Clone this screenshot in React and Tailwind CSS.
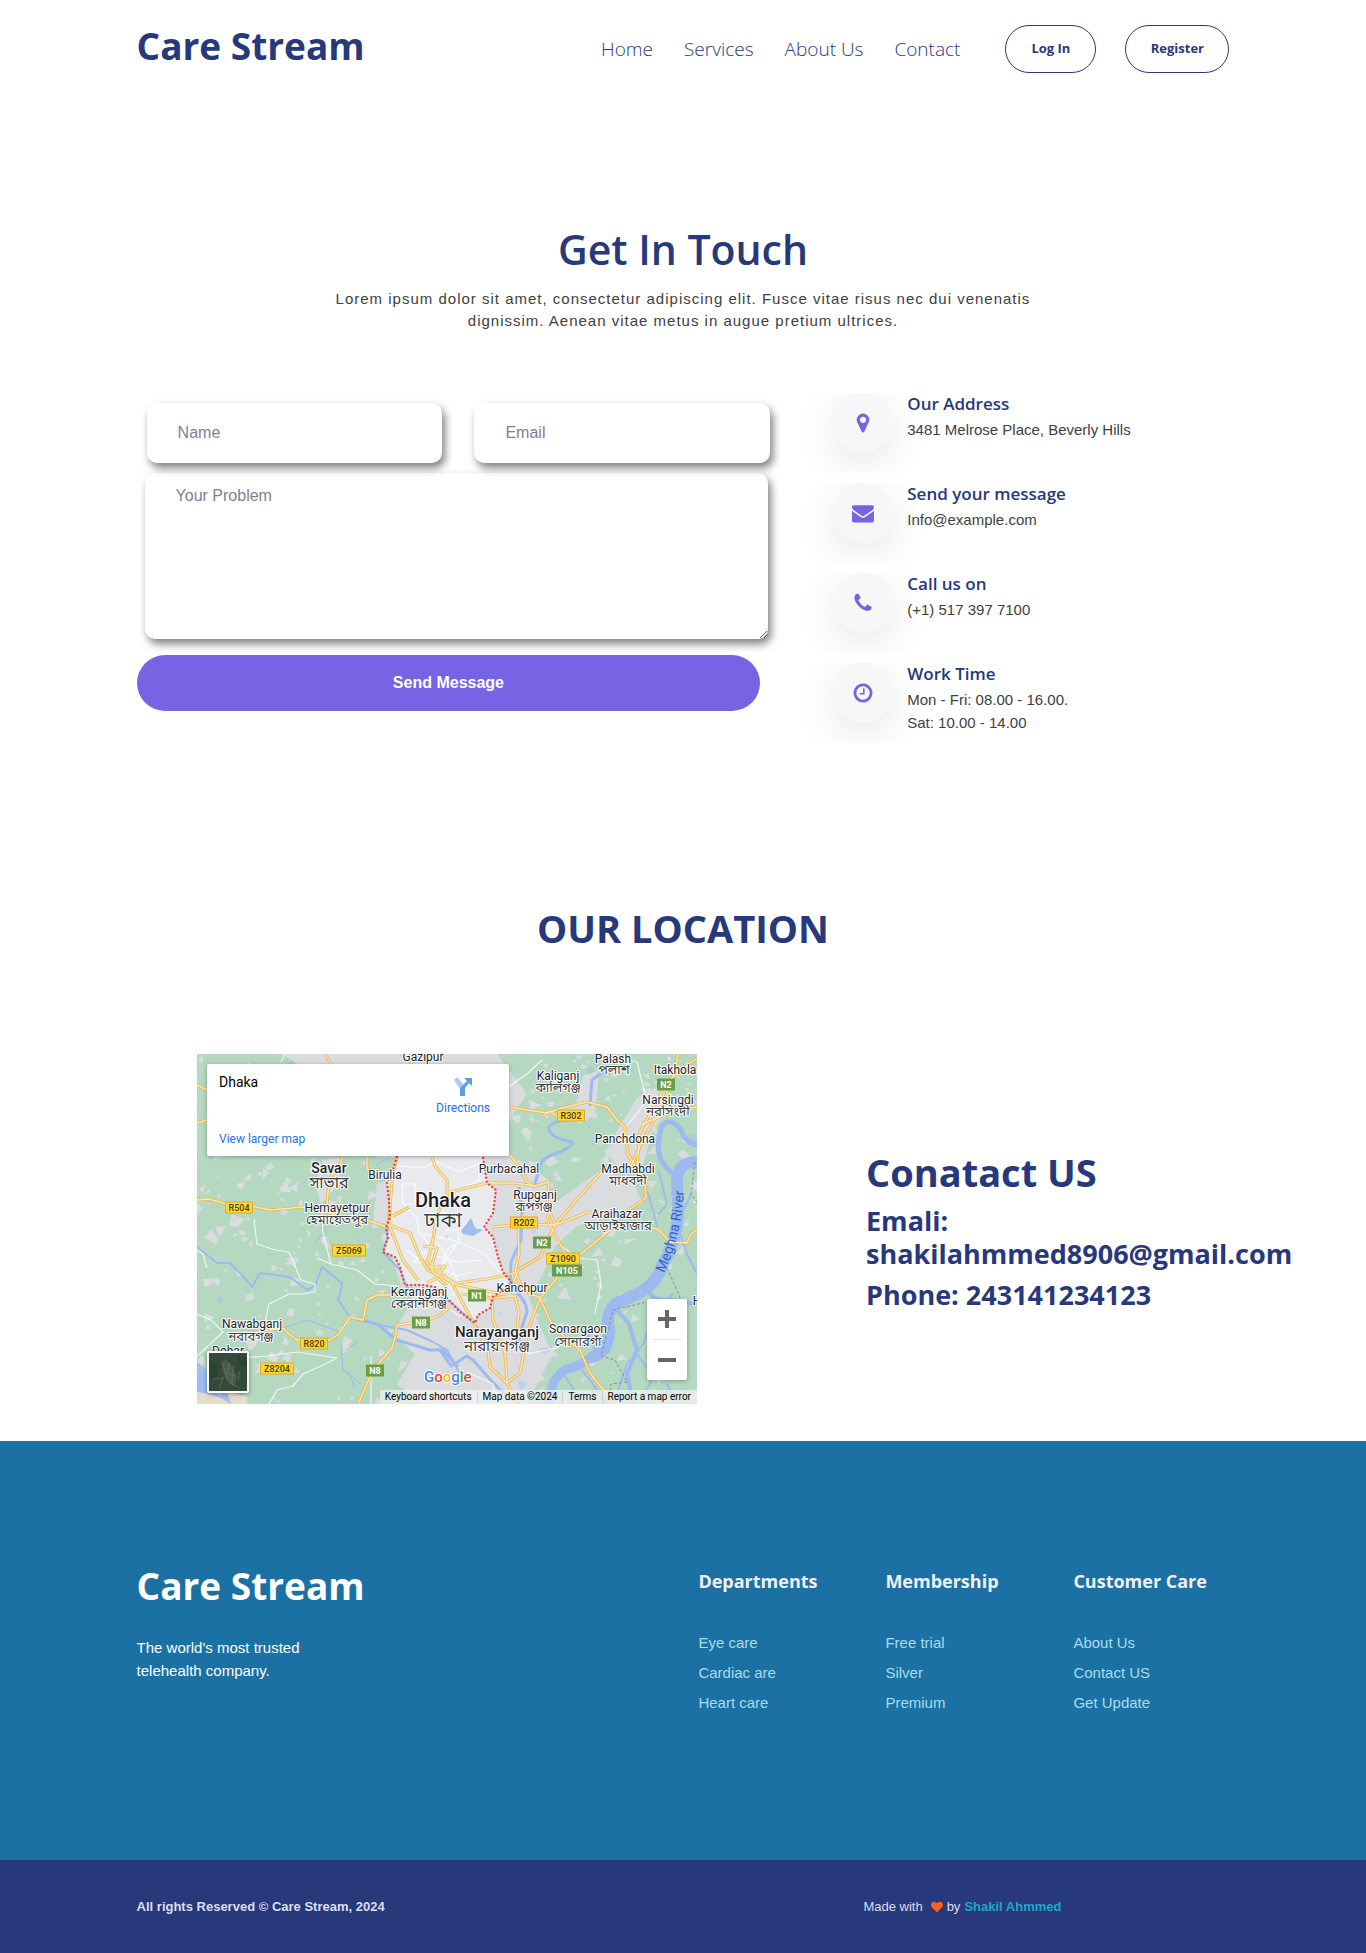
import React from "react";

const NAVY = "text-[#27387b]";
const HEAD = "font-['Segoe_UI','Open_Sans',sans-serif]";
const BODY = "font-['Liberation_Sans',Arial,sans-serif]";

const ICONS = {
  marker:
    "M1152 640q0-106-75-181t-181-75-181 75-75 181 75 181 181 75 181-75 75-181zm256 0q0 109-33 179l-364 774q-16 33-47.5 52t-67.5 19-67.5-19-46.5-52l-365-774q-33-70-33-179 0-212 150-362t362-150 362 150 150 362z",
  envelope:
    "M1792 710v794q0 66-47 113t-113 47h-1472q-66 0-113-47t-47-113v-794q44 49 101 87 362 246 497 345 57 42 92.5 65.5t94.5 48 110 24.5h2q51 0 110-24.5t94.5-48 92.5-65.5q170-123 498-345 57-39 100-87zm0-294q0 79-49 151t-122 123q-376 261-468 325-10 7-42.5 31t-54 38.5-52 32.5-57.5 27-50 9h-2q-23 0-50-9t-57.5-27-52-32.5-54-38.5-42.5-31q-91-64-262-182.5t-205-142.5q-62-42-117-115.5t-55-136.5q0-78 41.5-130t118.5-52h1472q65 0 112.5 47t47.5 113z",
  phone:
    "M1600 1240q0 27-10 70.5t-21 68.5q-21 50-122 106-94 51-186 51-27 0-53-3.5t-57.5-12.5-47-14.5-55.5-20.5-49-18q-98-35-175-83-127-79-264-216t-216-264q-48-77-83-175-3-9-18-49t-20.5-55.5-14.5-47-12.5-57.5-3.5-53q0-92 51-186 56-101 106-122 25-11 68.5-21t70.5-10q14 0 21 3 18 6 53 76 11 19 30 54t35 63.5 31 53.5q3 4 17.5 25t21.5 35.5 7 28.5q0 20-28.5 50t-62 55-62 53-28.5 46q0 9 5 22.5t8.5 20.5 14 24 11.5 19q76 137 174 235t235 174q2 1 19 11.5t24 14 20.5 8.5 22.5 5q18 0 46-28.5t53-62 55-62 50-28.5q14 0 28.5 7t35.5 21.5 25 17.5q25 15 53.5 31t63.5 35 54 30q70 35 76 53 3 7 3 21z",
  clock:
    "M1024 544v448q0 14-9 23t-23 9h-320q-14 0-23-9t-9-23v-64q0-14 9-23t23-9h224v-352q0-14 9-23t23-9h64q14 0 23 9t9 23zm416 352q0-148-73-273t-198-198-273-73-273 73-198 198-73 273 73 273 198 198 273 73 273-73 198-198 73-273zm224 0q0 209-103 385.5t-279.5 279.5-385.5 103-385.5-103-279.5-279.5-103-385.5 103-385.5 279.5-279.5 385.5-103 385.5 103 279.5 279.5 103 385.5z",
  heart:
    "M896 1664q-26 0-44-18l-624-602q-10-8-27.5-26t-55.5-65.5-68-97.5-53.5-121-23.5-138q0-220 127-344t351-124q62 0 126.5 21.5t120 58 95.5 68.5 76 68q36-36 76-68t95.5-68.5 120-58 126.5-21.5q224 0 351 124t127 344q0 221-229 450l-623 600q-18 18-44 18z",
};

function Icon({ name, className }) {
  return (
    <svg viewBox="0 0 1792 1792" fill="currentColor" aria-hidden="true" className={className}>
      <path d={ICONS[name]} />
    </svg>
  );
}

/* ---------- Map artwork ---------- */

const YELLOW_ROADS = [
  "M0 146L12 145L26 149L50 151L73 156L106 153L130 158L150 165L170 166L190 173",
  "M0 31L10 36",
  "M0 69L10 66",
  "M128 0L134 10",
  "M204 0L216 10",
  "M146 103L142 112L133 124L131 138L130 151L140 165",
  "M170 103L170 115L190 120L197 118",
  "M200 103L196 118L194 139L192 171L213 179L223 203L231 216L260 231L290 237L316 242",
  "M192 171L198 186L206 206L221 226",
  "M196 162L212 153",
  "M235 103L238 112L250 126L250 143L240 160L236 186L231 206L243 219L260 231",
  "M226 192L240 194L234 214L248 212L240 222L228 206",
  "M253 138L290 129L318 129L338 132L352 128L350 151L358 171",
  "M313 101L323 114L330 128L338 133",
  "M313 53L330 56L350 59L365 54L390 48L410 53L420 66L428 73L431 101L440 114L448 128L449 144L430 157",
  "M346 62L352 57L360 62L375 57",
  "M358 171L380 145L405 118L430 112",
  "M295 173L326 170L358 171L372 166L390 158L400 160",
  "M358 171L343 203L321 216L316 230",
  "M350 166L368 199L366 222",
  "M354 151L350 166",
  "M500 4L486 14L470 28L456 54L443 78L440 114",
  "M481 0L479 14L472 34L460 62L447 84L434 112",
  "M500 53L480 56L460 64L445 70",
  "M421 171L413 176L373 209L343 244L331 276L323 319L310 329L320 350",
  "M320 222L326 236L343 244L356 273L383 296L393 319L404 333L420 350",
  "M260 229L290 225L318 219L322 200L321 172L327 160",
  "M264 240L295 244L318 242L322 258L320 276",
  "M253 225L262 242L276 268L291 296L293 313L310 329",
  "M295 244L296 266L308 299L310 329",
  "M453 173L462 176L473 188L490 189L494 180L500 176",
  "M56 279L72 276L86 274L92 280L100 286L133 286L142 280L153 263L166 266L170 246L180 241L193 241L215 240",
  "M253 253L240 263L222 268L200 271L198 284L195 294L176 316L161 350",
  "M230 229L240 224L250 232",
];

const WHITE_ROADS = [
  "M57 166L60 190L78 196L92 198L104 226L118 230L118 238L104 240L92 240L72 250L68 268L84 276",
  "M0 260L14 266L26 278L0 302",
  "M46 304L70 302L100 298L140 304L124 312L106 320L96 332L80 336L72 350",
  "M125 158L126 180L134 210L160 216L178 230L200 232",
  "M134 210L120 204",
  "M174 302L174 350",
  "M10 214L6 200L0 196",
  "M300 40L310 34L330 20L345 6",
  "M406 0L440 8L448 40L456 60",
  "M452 44L430 72",
  "M200 112L226 114L240 108L262 118L285 108",
  "M205 130L218 130L218 150L206 150ZM218 140L240 142L246 158L260 162",
  "M206 150L220 164L222 178L232 190",
  "M220 178L246 184L262 188L288 200L304 220",
  "M240 188L252 206L262 230L256 242",
  "M236 210L216 208L226 198L260 208L284 206",
  "M260 150L262 188L248 206L240 232",
  "M243 248L262 262L280 258",
  "M262 188L250 196L244 214L260 222L276 218",
  "M210 196L222 206L236 214L248 228",
  "M282 110L282 126L270 132",
  "M360 188L380 204L400 206L404 230L398 260",
  "M330 300L360 294L372 284",
  "M300 350L296 330L270 318",
  "M88 0L84 8",
  "M250 176L264 176L270 168",
];

const RIVERS = [
  { w: 2, d: "M0 193L20 209L33 209L46 222L55 233L63 219L93 223L110 236L118 232L125 213L145 229L143 240L141 246L153 263L180 270" },
  { w: 1, d: "M86 274L110 266L141 277" },
  { w: 3, d: "M160 265L180 270L200 286L233 296L246 296L260 312" },
  { w: 2, d: "M176 270L210 276L236 288L250 296L262 318" },
  { w: 3, d: "M406 18L395 26L393 51" },
  { w: 3, d: "M372 66Q350 68 352 76Q354 84 375 88Q376 92 363 98Q344 104 343 112L338 130" },
  { w: 3, d: "M322 134L325 160L324 186L314 208L313 232Q330 246 330 258L323 279L322 292" },
  { w: 3, d: "M243 296L254 312L270 302L276 306L290 322L303 336L322 350" },
  { w: 2, d: "M192 163L190 184L186 198L203 216L210 234L236 238L256 250L278 270L290 286" },
  { w: 5, d: "M500 91Q489 90 484 76Q474 62 465 72Q458 92 464 106Q470 116 479 122" },
  { w: 12, d: "M500 108Q480 108 480 126L481 160Q480 186 465 212Q460 230 440 240L418 250Q408 262 412 276Q412 296 396 303" },
  { w: 9, d: "M403 296Q386 312 368 316Q352 326 353 350" },
  { w: 2, d: "M462 118L470 150L462 160M476 240L456 262L446 290L430 310L420 340" },
  { w: 4, d: "M450 232Q452 246 470 246L500 250" },
  { w: 4, d: "M420 256L432 270L440 296L430 320L436 350" },
  { w: 2, d: "M440 120L452 142L460 172M494 140L480 170L490 200L500 220" },
  { w: 2, d: "M390 280L398 296M380 310L396 330L410 350M365 318L376 334L372 350" },
  { w: 2, d: "M462 262L480 280L470 300M440 300L456 322L444 350M470 330L480 350" },
  { w: 1, d: "M144 290L146 316L164 330M150 296L160 288M152 318L158 334" },
  { w: 1, d: "M118 190L128 176L130 160M180 110L192 104" },
];

const BOUNDARY =
  "M200 103L196 116L190 129L192 146L193 163L189 174L191 184L186 198L198 203L203 213L208 231L225 231L238 233L250 244L263 258L278 269L281 261L293 254L296 243L315 229L306 218L301 203L296 183L287 173L296 159L299 136L290 129L286 103";

const PLACES = [
  ["Gazipur", 226, 7, 12], ["Palash", 416, 9, 12], ["Itakhola", 478, 20, 12],
  ["Kaliganj", 361, 26, 12], ["Narsingdi", 471, 50, 12], ["Panchdona", 428, 89, 12],
  ["Purbacahal", 312, 119, 12], ["Madhabdi", 431, 119, 12], ["Rupganj", 338, 145, 12],
  ["Araihazar", 420, 164, 12], ["Savar", 132, 119, 14, 500], ["Birulia", 188, 125, 12],
  ["Hemayetpur", 140, 158, 12], ["Dhaka", 246, 153, 20, 500], ["Kanchpur", 325, 238, 12],
  ["Keraniganj", 222, 242, 12], ["Nawabganj", 55, 274, 12], ["Dohar", 31, 301, 12],
  ["Narayanganj", 300, 283, 15, 500], ["Sonargaon", 381, 279, 12], ["H", 500, 251, 12],
];

const PLACES_BN = [
  ["পলাশ", 417, 20, 13], ["কালিগঞ্জ", 361, 38, 13], ["নরসিংদী", 471, 62, 13],
  ["মাধবদী", 431, 131, 13], ["রূপগঞ্জ", 337, 157, 13], ["আড়াইহাজার", 421, 176, 13],
  ["সাভার", 132, 134, 16], ["হেমায়েতপুর", 140, 170, 13], ["ঢাকা", 246, 173, 20],
  ["কেরানীগঞ্জ", 222, 254, 13], ["নবাবগঞ্জ", 54, 287, 13], ["নারায়ণগঞ্জ", 300, 297, 15],
  ["সোনারগাঁ", 381, 292, 13],
];

const SHIELDS = [
  ["R302", 374, 61], ["R504", 42, 153], ["R202", 327, 168], ["Z5069", 152, 196],
  ["Z1090", 366, 204], ["R820", 117, 289], ["Z8204", 80, 314],
  ["N2", 469, 30, 1], ["N2", 345, 188, 1], ["N105", 370, 216, 1],
  ["N1", 280, 241, 1], ["N8", 224, 268, 1], ["N8", 178, 316, 1],
];

/* Small irregular settlement patches, laid out from a fixed seed. */
function makePatches(count, seed) {
  let s = seed;
  const rnd = () => {
    s = (s * 1103515245 + 12345) % 2147483648;
    return s / 2147483648;
  };
  const out = [];
  for (let i = 0; i < count; i++) {
    const x = rnd() * 500;
    const y = rnd() * 350;
    const r = 2 + rnd() * rnd() * 7;
    const n = 3 + Math.floor(rnd() * 2);
    const a = rnd() * 6;
    const pts = [];
    for (let k = 0; k < n; k++) {
      const t = a + (k * 6.283) / n + rnd() * 0.9;
      const q = r * (0.5 + rnd() * 0.8);
      pts.push(`${Math.round(x + Math.cos(t) * q)},${Math.round(y + Math.sin(t) * q)}`);
    }
    out.push(pts.join(" "));
  }
  return out;
}
const PATCHES = makePatches(480, 77);
const SPECKS = makePatches(24, 4211);

function MapArt() {
  return (
    <svg viewBox="0 0 500 350" className="block h-full w-full" role="img" aria-label="Map of Dhaka">
      <rect width="500" height="350" fill="#b5d8c0" />
      <g fill="#dadce0">
        {PATCHES.map((p, i) => <polygon key={i} points={p} />)}
        <path d="M84 0L300 0L330 40L316 60L300 104L180 104L150 60L120 20Z" />
        <path d="M200 100L312 100L330 112L352 126L356 150L404 116L436 128L446 150L420 158L380 172L358 192L346 220L332 244L342 270L356 300L340 330L330 350L226 350L200 330L218 300L196 280L206 262L216 246L204 232L196 206Z" />
        <path d="M440 44L466 30L478 44L456 76L446 110L424 116L408 98L424 70Z" />
        <path d="M386 22L402 16L398 60L384 70L360 60L380 48Z" />
        <path d="M126 106L146 104L142 130L124 150L118 130Z" />
        <path d="M180 130L192 126L190 170L176 168Z" />
      </g>
      <path d={BOUNDARY + "Z"} fill="#e8eaed" />
      <g fill="#9fbdf0">
        {SPECKS.map((p, i) => <polygon key={i} points={p} opacity="0.4" />)}
        <path d="M264 176L274 164L278 174L286 176L276 182L266 180Z" />
        <path d="M0 308L12 318L20 340L34 350L0 350Z" />
        <path d="M22 330L46 340L50 350L24 350Z" />
      </g>
      <path d="M0 338Q20 340 34 350L0 350ZM30 338L50 342L50 350L34 350Z" fill="#e6dccb" />
      <g fill="none" stroke="#9dbaf0" strokeLinecap="round" strokeLinejoin="round">
        {RIVERS.map((r, i) => <path key={i} d={r.d} strokeWidth={r.w} />)}
      </g>
      <g fill="none" stroke="#ffffff" strokeWidth="1.2" strokeLinejoin="round" opacity="0.8">
        {WHITE_ROADS.map((d, i) => <path key={i} d={d} />)}
      </g>
      <g fill="none" stroke="#edb54c" strokeWidth="3.2" strokeLinejoin="round" opacity="0.9">
        {YELLOW_ROADS.map((d, i) => <path key={i} d={d} />)}
      </g>
      <g fill="none" stroke="#fde9b5" strokeWidth="1.4" strokeLinejoin="round">
        {YELLOW_ROADS.map((d, i) => <path key={i} d={d} />)}
      </g>
      <path d="M470 214L478 232L484 246M498 108L494 140L500 148M460 256L450 248L416 256L410 280L404 302L418 306L430 328L414 330L412 346" fill="none" stroke="#8a8f94" strokeWidth="1" strokeDasharray="3 2" />
      <path d={BOUNDARY} fill="none" stroke="#e8413c" strokeWidth="2.4" strokeLinecap="round" strokeDasharray="0 4" />

      {SHIELDS.map(([t, x, y, green], i) => {
        const w = t.length * 6 + (green ? 5 : 3);
        return (
          <g key={i}>
            <rect x={x - w / 2} y={y - 5} width={w} height="11" fill={green ? "#689f43" : "#fdd835"} stroke={green ? "#689f43" : "#e0a92f"} />
            <text x={x} y={y + 4} textAnchor="middle" fontSize="9" fontWeight={green ? 700 : 500} fontFamily="Roboto, sans-serif" fill={green ? "#ffffff" : "#4a3c10"}>{t}</text>
          </g>
        );
      })}
      <g fontFamily="'Noto Sans Bengali', 'Noto Sans', sans-serif" fill="#3c4043" stroke="#ffffff" strokeWidth="2" strokeLinejoin="round" paintOrder="stroke" textAnchor="middle">
        {PLACES_BN.map(([t, x, y, s], i) => (
          <text key={i} x={x} y={y} fontSize={s}>{t}</text>
        ))}
      </g>
      <g fontFamily="Roboto, sans-serif" fill="#202124" stroke="#ffffff" strokeWidth="2" strokeLinejoin="round" paintOrder="stroke" textAnchor="middle">
        {PLACES.map(([t, x, y, s, w], i) => (
          <text key={i} x={x} y={y} fontSize={s} fontWeight={w || 400}>{t}</text>
        ))}
      </g>
      <defs>
        <path id="meghna" d="M467 219Q486 180 488 120" />
      </defs>
      <text fontFamily="Roboto, sans-serif" fontSize="14" fill="#2f62c4">
        <textPath href="#meghna">Meghna River</textPath>
      </text>
      <text x="227" y="328" fontFamily="Roboto, sans-serif" fontSize="15" fontWeight="500" stroke="#ffffff" strokeWidth="2" paintOrder="stroke">
        <tspan fill="#4285f4">G</tspan><tspan fill="#ea4335">o</tspan><tspan fill="#fbbc05">o</tspan><tspan fill="#4285f4">g</tspan><tspan fill="#34a853">l</tspan><tspan fill="#ea4335">e</tspan>
      </text>
    </svg>
  );
}

function MapEmbed() {
  return (
    <div className="relative h-[350px] w-[500px] shrink-0 overflow-hidden font-['Roboto',sans-serif]">
      <MapArt />
      <div className="absolute left-[10px] top-[10px] flex h-[92px] w-[302px] justify-between rounded-[2px] bg-white py-2 pl-3 pr-4 shadow-[0_1px_4px_rgba(0,0,0,0.3)]">
        <div className="flex flex-col justify-between">
          <div className="text-[14px] leading-5 text-black">Dhaka</div>
          <a href="#map" className="text-[12px] leading-[18px] text-[#1a73e8]">View larger map</a>
        </div>
        <a href="#directions" className="flex flex-col items-center gap-1 pr-[3px] pt-1 text-[12px] leading-4 text-[#1a73e8]">
          <svg viewBox="0 0 18 20" className="h-5 w-[18px]" aria-hidden="true">
            <path d="M0 4L3 1L9 8L9 13L6 13Z" fill="#a9cbf7" />
            <path d="M6 20V12L13 5L10 2H18V10L15 7L11 12V20Z" fill="#5e9bea" />
          </svg>
          <span>Directions</span>
        </a>
      </div>
      <button type="button" aria-label="Show satellite imagery" className="absolute left-[10px] top-[297px] h-[42px] w-[42px] overflow-hidden rounded-[2px] border-2 border-white bg-[#33493a] shadow-[0_1px_4px_rgba(0,0,0,0.4)]">
        <svg viewBox="0 0 37 37" className="h-full w-full" aria-hidden="true">
          <rect width="37" height="37" fill="#344a38" />
          <path d="M14 5L20 9L24 16L27 24L24 33L16 25L13 16Z" fill="#4a5c4e" />
          <path d="M0 6L10 12L8 22L0 26ZM28 2L37 4V14L29 12Z" fill="#2a4430" />
          <path d="M12 8L16 18L20 30M20 10L18 20L26 22M24 12L22 30L30 34M4 26L14 24L10 34M30 18L28 26" stroke="#66746a" strokeWidth="0.7" fill="none" />
        </svg>
      </button>
      <div className="absolute left-[450px] top-[245px] flex h-[81px] w-10 flex-col items-center rounded-[2px] bg-white shadow-[0_1px_4px_rgba(0,0,0,0.3)]">
        <button type="button" aria-label="Zoom in" className="flex h-10 w-10 items-center justify-center">
          <svg viewBox="0 0 18 18" className="h-[18px] w-[18px]" fill="#666"><path d="M7 0h4v7h7v4h-7v7H7v-7H0V7h7z" /></svg>
        </button>
        <div className="h-px w-[30px] bg-[#e6e6e6]" />
        <button type="button" aria-label="Zoom out" className="flex h-10 w-10 items-center justify-center">
          <svg viewBox="0 0 18 18" className="h-[18px] w-[18px]" fill="#666"><path d="M0 7h18v4H0z" /></svg>
        </button>
      </div>
      <div className="absolute bottom-0 right-0 flex h-[14px] items-center bg-[#f5f5f5]/70 pr-px text-[10px] leading-[14px] text-black">
        <button type="button" className="px-[5px]">Keyboard shortcuts</button>
        <span className="border-l border-black/10 px-[5px]">Map data ©2024</span>
        <a href="#terms" className="border-l border-black/10 px-[5px]">Terms</a>
        <a href="#report" className="border-l border-black/10 px-[5px]">Report a map error</a>
      </div>
    </div>
  );
}

/* ---------- Page sections ---------- */

const CONTACTS = [
  { icon: "marker", title: "Our Address", lines: ["3481 Melrose Place, Beverly Hills"] },
  { icon: "envelope", title: "Send your message", lines: ["Info@example.com"] },
  { icon: "phone", title: "Call us on", lines: ["(+1) 517 397 7100"] },
  { icon: "clock", title: "Work Time", lines: ["Mon - Fri: 08.00 - 16.00.", "Sat: 10.00 - 14.00"] },
];

const COLUMNS = [
  { title: "Departments", links: ["Eye care", "Cardiac are", "Heart care"] },
  { title: "Membership", links: ["Free trial", "Silver", "Premium"] },
  { title: "Customer Care", links: ["About Us", "Contact US", "Get Update"] },
];

const FIELD =
  "rounded-[10px] bg-white px-[31px] text-[16px] text-[#333] shadow-[3px_5px_8px_rgba(0,0,0,0.5)] outline-none placeholder:text-[#7f7f8f]";

function Header() {
  return (
    <header className={`mx-auto flex w-4/5 items-start justify-between py-[25px] ${HEAD} ${NAVY}`}>
      <a href="#home" className="text-[37px] font-bold leading-[42px]">Care Stream</a>
      <div className="flex items-center">
        <nav className="flex gap-[31px] text-[19px] font-light leading-6">
          {["Home", "Services", "About Us", "Contact"].map((t) => (
            <a key={t} href={"#" + t}>{t}</a>
          ))}
        </nav>
        <button type="button" className="ml-[45px] h-12 w-[91px] rounded-[24px] border border-[#27387b] text-[13px] font-bold">Log In</button>
        <button type="button" className="ml-[29px] h-12 w-[104px] rounded-[24px] border border-[#27387b] text-[13px] font-bold">Register</button>
      </div>
    </header>
  );
}

function ContactForm() {
  return (
    <form className="w-[60%] pt-[10px]" onSubmit={(e) => e.preventDefault()}>
      <div className="grid grid-cols-2">
        <input type="text" aria-label="Name" placeholder="Name" className={`ml-[10px] h-[60px] w-[calc(100%-32px)] ${FIELD}`} />
        <input type="email" aria-label="Email" placeholder="Email" className={`ml-[10px] h-[60px] w-[calc(100%-32px)] ${FIELD}`} />
      </div>
      <textarea aria-label="Your Problem" placeholder="Your Problem" className={`ml-2 mt-[10px] block h-[166px] w-[calc(100%-32px)] py-[11px] leading-6 ${FIELD}`} />
      <button type="submit" className="mt-4 h-14 w-[calc(100%-32px)] rounded-[28px] bg-[#7764e4] text-[16px] font-bold text-white">Send Message</button>
    </form>
  );
}

function Footer() {
  return (
    <footer>
      <div className="bg-[#1b71a3]">
        <div className="mx-auto flex w-4/5 pb-[142px] pt-[121px]">
          <div className="flex-1">
            <h2 className={`text-[37px] font-bold leading-[48px] text-white ${HEAD}`}>Care Stream</h2>
            <p className="mt-[26px] w-[200px] text-[15px] leading-[23px] text-white">The world's most trusted telehealth company.</p>
          </div>
          <div className="grid w-[531px] grid-cols-[187px_188px_1fr]">
            {COLUMNS.map((c) => (
              <div key={c.title}>
                <h3 className={`whitespace-nowrap pt-[7px] text-[18px] font-bold leading-6 text-[#f0f0fa] ${HEAD}`}>{c.title}</h3>
                <ul className="mt-[35px] text-[15px] leading-[30px] text-[#a9dcec]">
                  {c.links.map((l) => (
                    <li key={l}><a href={"#" + l}>{l}</a></li>
                  ))}
                </ul>
              </div>
            ))}
          </div>
        </div>
      </div>
      <div className="bg-[#27387b]">
        <div className="mx-auto flex w-4/5 py-[35px] text-[13px] leading-[23px] text-[#dcdff0]">
          <p className="flex-1 font-bold">All rights Reserved © Care Stream, 2024</p>
          <p className="flex w-[366px] items-center gap-1">
            <span>Made with</span>
            <Icon name="heart" className="ml-1 h-3 w-3 text-[#ff611d]" />
            <span>by</span>
            <a href="#author" className="font-bold text-[#1ba8c9]">Shakil Ahmmed</a>
          </p>
        </div>
      </div>
    </footer>
  );
}

export default function App() {
  return (
    <div className={`min-h-screen bg-white ${BODY}`}>
      <Header />
      <main>
        <section className="mx-auto w-4/5 pt-[121px]">
          <h1 className={`text-center text-[41px] font-semibold leading-[60px] ${HEAD} ${NAVY}`}>Get In Touch</h1>
          <p className="mx-auto mt-[9px] max-w-[720px] text-center text-[15px] leading-[22px] tracking-[1px] text-[#404040]">
            Lorem ipsum dolor sit amet, consectetur adipiscing elit. Fusce vitae risus nec dui venenatis dignissim. Aenean vitae metus in augue pretium ultrices.
          </p>
          <div className="mt-[61px] flex">
            <ContactForm />
            <ul className="flex flex-1 flex-col gap-[10px]">
              {CONTACTS.map((c) => (
                <li key={c.title} className="flex h-20 gap-[14px] overflow-hidden pl-[41px]">
                  <span className="flex h-[60px] w-[60px] shrink-0 items-center justify-center rounded-full bg-[#f7f7f7] text-[#7764e4] shadow-[0_10px_40px_rgba(0,0,0,0.1)]">
                    <Icon name={c.icon} className="h-[22px] w-[22px]" />
                  </span>
                  <div>
                    <h2 className={`text-[17px] font-semibold leading-[22px] ${HEAD} ${NAVY}`}>{c.title}</h2>
                    <div className="mt-[3px] text-[15px] leading-[23px] text-[#404040]">
                      {c.lines.map((l) => <p key={l}>{l}</p>)}
                    </div>
                  </div>
                </li>
              ))}
            </ul>
          </div>
        </section>
        <section className={`pt-[155px] ${HEAD} ${NAVY}`}>
          <h2 className="text-center text-[38px] font-bold leading-[60px]">OUR LOCATION</h2>
          <div className="mt-24 flex gap-[169px] pb-[37px] pl-[197px] pr-[85px]">
            <MapEmbed />
            <div className="flex-1 pt-[94px] text-[27px] font-bold leading-[33px]">
              <h2 className="text-[38px] leading-[48px]">Conatact US</h2>
              <p className="mt-2">Emali: shakilahmmed8906@gmail.com</p>
              <p className="mt-2">Phone: 243141234123</p>
            </div>
          </div>
        </section>
      </main>
      <Footer />
    </div>
  );
}
